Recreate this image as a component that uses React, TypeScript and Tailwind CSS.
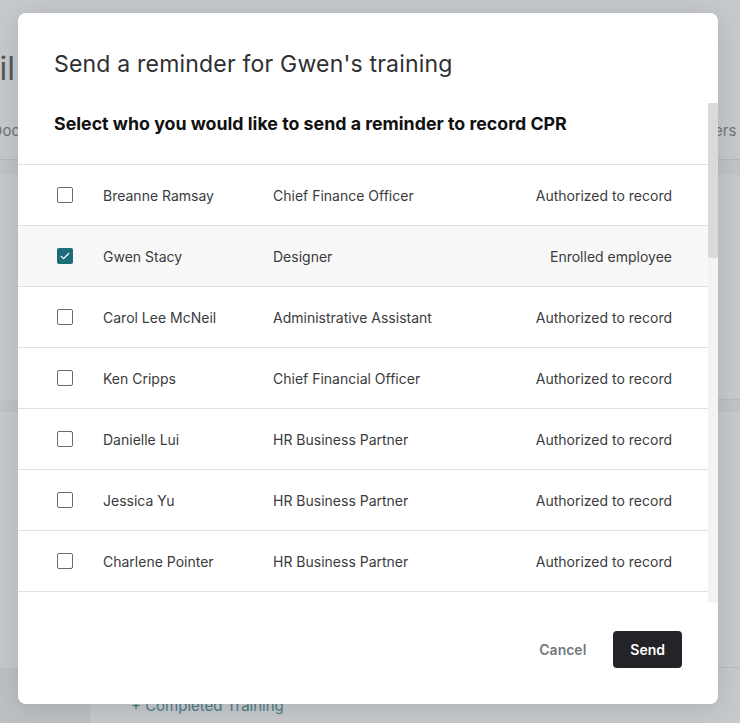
import { useState } from "react";

const people = [
  { name: "Breanne Ramsay", title: "Chief Finance Officer", status: "Authorized to record" },
  { name: "Gwen Stacy", title: "Designer", status: "Enrolled employee" },
  { name: "Carol Lee McNeil", title: "Administrative Assistant", status: "Authorized to record" },
  { name: "Ken Cripps", title: "Chief Financial Officer", status: "Authorized to record" },
  { name: "Danielle Lui", title: "HR Business Partner", status: "Authorized to record" },
  { name: "Jessica Yu", title: "HR Business Partner", status: "Authorized to record" },
  { name: "Charlene Pointer", title: "HR Business Partner", status: "Authorized to record" },
  { name: "Marcus Hill", title: "HR Business Partner", status: "Authorized to record" },
];

function Checkbox({ checked, onChange }: { checked: boolean; onChange: () => void }) {
  return (
    <button
      type="button"
      onClick={onChange}
      className={
        checked
          ? "flex h-4 w-4 shrink-0 items-center justify-center rounded-[2px] bg-[#1d6c79]"
          : "h-4 w-4 shrink-0 rounded-[2px] border border-[#6b6b6b] bg-white"
      }
    >
      {checked && (
        <svg viewBox="0 0 16 16" className="h-3 w-3" fill="none">
          <path d="M3 8.5l3.2 3L13 4.5" stroke="white" strokeWidth="1.8" strokeLinecap="round" strokeLinejoin="round" />
        </svg>
      )}
    </button>
  );
}

export default function App() {
  const [selected, setSelected] = useState<number[]>([1]);

  const toggle = (i: number) =>
    setSelected((s) => (s.includes(i) ? s.filter((x) => x !== i) : [...s, i]));

  return (
    <div className="relative h-[723px] w-full overflow-hidden bg-[#c6c9cc] font-['Inter',sans-serif]">
      {/* page behind the overlay */}
      <div className="flex h-full flex-col">
        <div className="flex h-[160px] flex-col border-b border-[#b4b8bc]">
          <div className="flex h-[110px] items-start pt-[53px]">
            <div className="flex w-[15px] justify-end overflow-hidden">
              <span className="text-[32px] leading-none text-[#55585b]">Detail</span>
            </div>
          </div>
          <div className="flex flex-1 items-start justify-between pt-[10px] text-[15px] text-[#6f7378]">
            <div className="flex w-[20px] justify-end overflow-hidden">
              <span>Doc</span>
            </div>
            <div className="flex w-[26px] justify-start overflow-hidden">
              <span>ers</span>
            </div>
          </div>
        </div>
        <div className="h-[15px] bg-[#bfc3c6]" />
        <div className="flex h-[225px] flex-col justify-end">
          <div className="ml-auto w-[40px] border-b border-[#b6babd] pb-[64px]" />
        </div>
        <div className="h-[12px] bg-[#bfc3c6]" />
        <div className="flex h-[256px] flex-col justify-end">
          <div className="ml-auto w-[40px] border-b border-[#b6babd] pb-[68px]" />
        </div>
        <div className="flex flex-1">
          <div className="w-[90px] bg-[#bcc0c3]" />
          <div className="flex flex-1 items-end pb-[6px] pl-[41px]">
            <span className="text-[15px] text-[#4c7f88]">+ Completed Training</span>
          </div>
        </div>
      </div>

      {/* modal */}
      <div className="absolute left-[18px] top-[13px] flex h-[691px] w-[700px] flex-col rounded-lg bg-white shadow-[0_4px_24px_rgba(0,0,0,0.12)]">
        <div className="h-[90px] px-[36px] pt-[37px]">
          <h2 className="text-[23px] leading-[28px] font-normal tracking-[0.2px] text-[#2e2f31]">
            Send a reminder for Gwen's training
          </h2>
        </div>

        <div className="flex h-[500px]">
          <div className="flex-1 overflow-hidden">
            <p className="px-[36px] pt-[9px] pb-[28px] text-[17.8px] leading-[24px] font-bold text-[#111]">
              Select who you would like to send a reminder to record CPR
            </p>
            <div className="border-t border-[#e0e0e0]">
              {people.map((p, i) => (
                <div
                  key={p.name}
                  className={
                    (i === 1 ? "bg-[#f8f8f8] " : "bg-white ") +
                    "flex h-[61px] items-center border-b border-[#e0e0e0] pl-[39px] pr-[36px] text-[14px] text-[#3a3b3d]"
                  }
                >
                  <Checkbox checked={selected.includes(i)} onChange={() => toggle(i)} />
                  <span className="ml-[30px] w-[170px]">{p.name}</span>
                  <span className="flex-1">{p.title}</span>
                  <span>{p.status}</span>
                </div>
              ))}
            </div>
          </div>
          <div className="flex w-[10px] flex-col bg-[#f3f3f3]">
            <div className="h-[155px] rounded-[2px] bg-[#d9d9d9]" />
          </div>
        </div>

        <div className="flex flex-1 items-start justify-end gap-[27px] pr-[36px] pt-[28px]">
          <button type="button" className="h-[37px] text-[14px] font-semibold text-[#76787d]">
            Cancel
          </button>
          <button
            type="button"
            className="h-[37px] rounded-[4px] bg-[#232428] px-[17px] text-[14px] font-semibold text-white"
          >
            Send
          </button>
        </div>
      </div>
    </div>
  );
}
